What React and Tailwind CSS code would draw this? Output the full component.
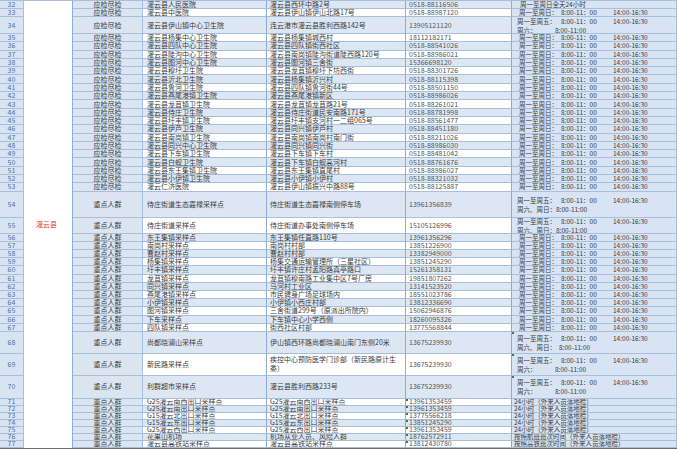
const rows = [
  [32, '应检尽检', '灌云县人民医院', '灌云县西环中路2号', '0518-88116506', 'all24'],
  [33, '应检尽检', '灌云县中医院', '灌云县伊山镇伊山北路17号', '0518-88987120', 'daily'],
  [34, '应检尽检', '灌云县伊山镇中心卫生院', '连云港市灌云县胜利西路142号', '13905121120', 'sat'],
  [35, '应检尽检', '灌云县杨集中心卫生院', '灌云县杨集镇城西村', '18112182171', 'daily'],
  [36, '应检尽检', '灌云县四队中心卫生院', '灌云县四队镇街西社区', '0518-88541026', 'daily'],
  [37, '应检尽检', '灌云县陡沟中心卫生院', '灌云县南岗镇陡沟街道陡西路120号', '0518-88986021', 'daily'],
  [38, '应检尽检', '灌云县图河中心卫生院', '灌云县图河镇三舍街', '15366698120', 'daily'],
  [39, '应检尽检', '灌云县穆圩卫生院', '灌云县龙苴镇穆圩下坊西街', '0518-88301726', 'daily'],
  [40, '应检尽检', '灌云县沂北卫生院', '灌云县杨集镇沂兴村', '0518-88115398', 'daily'],
  [41, '应检尽检', '灌云县鲁河卫生院', '灌云县四队镇鲁河街44号', '0518-88501150', 'daily'],
  [42, '应检尽检', '灌云县燕尾港镇卫生院', '灌云县燕尾港镇新区', '0518-88986026', 'daily'],
  [43, '应检尽检', '灌云县龙苴镇卫生院', '灌云县龙苴镇龙苴路21号', '0518-88261021', 'daily'],
  [44, '应检尽检', '灌云县侍庄卫生院', '灌云县侍庄街道民安南路171号', '0518-88781998', 'daily'],
  [45, '应检尽检', '灌云县圩丰镇卫生院', '灌云县圩丰镇支河村一二组065号', '0518-88561477', 'daily'],
  [46, '应检尽检', '灌云县伊芦卫生院', '灌云县同兴镇伊芦村', '0518-88451180', 'daily'],
  [47, '应检尽检', '灌云县南岗镇卫生院', '灌云县南岗镇南岗村南门街', '0518-88211026', 'daily'],
  [48, '应检尽检', '灌云县同兴中心卫生院', '灌云县同兴镇同兴街', '0518-88986030', 'daily'],
  [49, '应检尽检', '灌云县下车镇卫生院', '灌云县下车镇下车村', '0518-88481042', 'daily'],
  [50, '应检尽检', '灌云县白蚬卫生院', '灌云县下车镇白蚬高河村', '0518-88761676', 'daily'],
  [51, '应检尽检', '灌云县东王集镇卫生院', '灌云县东王集镇直尾村', '0518-88986027', 'daily'],
  [52, '应检尽检', '灌云县小伊镇卫生院', '灌云县小伊镇小伊村', '0518-88321032', 'daily'],
  [53, '应检尽检', '灌云仁济医院', '灌云县伊山镇振兴中路88号', '0518-88125887', 'daily'],
  [54, '重点人群', '侍庄街道生态嘉禄采样点', '侍庄街道生态嘉禄南侧停车场', '13961356839', 'weekend'],
  [55, '重点人群', '侍庄街道采样点', '侍庄街道办事处南侧停车场', '15105126996', 'weekend'],
  [56, '重点人群', '东王集镇采样点', '东王集镇任直路110号', '13961356296', 'daily'],
  [57, '重点人群', '南岗村采样点', '南岗村村部', '13851226900', 'daily'],
  [58, '重点人群', '曹赵村采样点', '曹赵村村部', '13382949000', 'daily'],
  [59, '重点人群', '杨集镇采样点', '杨集交通运输管理所（三星社区）', '13851245290', 'daily'],
  [60, '重点人群', '圩丰镇采样点', '圩丰镇许庄村孟阳路真亭路口', '15261358131', 'daily'],
  [61, '重点人群', '龙苴镇采样点', '龙苴镇穆南路工业集中区7号厂房', '19851807262', 'daily'],
  [62, '重点人群', '同兴镇采样点', '马河村工业区', '13141523520', 'daily'],
  [63, '重点人群', '燕尾港镇采样点', '市民健身广场足球场内', '18551023786', 'daily'],
  [64, '重点人群', '小伊镇采样点', '小伊镇小西庄村部', '13812336690', 'daily'],
  [65, '重点人群', '图河镇采样点', '三舍街道299号（原派出所院内）', '15062946876', 'daily'],
  [66, '重点人群', '下车采样点', '下车镇中心小学西侧', '18260095326', 'daily'],
  [67, '重点人群', '四队镇采样点', '街西社区村部', '13775568844', 'daily'],
  [68, '重点人群', '尚都晓澜山采样点', '伊山镇西环路尚都晓澜山南门东侧20米', '13675239930', 'weekend2'],
  [69, '重点人群', '新民路采样点', '疾控中心预防医学门诊部（新民路原计生委）', '13675239930', 'sat'],
  [70, '重点人群', '利群超市采样点', '灌云县胜利西路233号', '13675239930', 'sat'],
  [71, '重点人群', 'G25灌云南西出口采样点', 'G25灌云南西出口采样点', '13961353459', '24h'],
  [72, '重点人群', 'G25灌云南出口采样点', 'G25灌云南出口采样点', '13961353459', '24h'],
  [73, '重点人群', 'G15灌云北出口采样点', 'G15灌云北出口采样点', '13775566218', '24h'],
  [74, '重点人群', 'G15灌云东出口采样点', 'G15灌云东出口采样点', '13851245290', '24h'],
  [75, '重点人群', 'G25灌云西出口采样点', 'G25灌云西出口采样点', '13961353459', '24h'],
  [76, '重点人群', '花果山机场', '机场从业人员、风险人群', '18762572911', 'flight'],
  [77, '重点人群', '灌云县高铁站采样点', '灌云县高铁站采样点', '13812430780', 'train'],
]

// row heights follow the sheet: rows differ a little from block to block
const rowHeight = (n) => {
  if (n === 34) return 'h-[17px]'
  if (n === 54) return 'h-[26px]'
  if (n === 55) return 'h-[16px]'
  if (n === 68 || n === 69) return 'h-[22px]'
  if (n === 70) return 'h-[23px]'
  if (n <= 33) return 'h-[8px]'
  if (n <= 53) return 'h-[8.3px]'
  if (n <= 67) return 'h-[8.2px]'
  return 'h-[7px]'
}

const cell = 'relative flex items-center overflow-hidden whitespace-nowrap border-b border-r border-[#a8bfdc]'

// little "number stored as text" marker in the sheet
const Mark = () => <span className="absolute left-0 top-0 w-[2px] h-[2px] bg-[#3d7a4a]" />

function Times() {
  return (
    <>
      <span className="inline-block w-[52px]">8:00-11：00</span>
      <span>14:00-16:30</span>
    </>
  )
}

function Hours({ kind }) {
  if (kind === 'all24') return <div className="pl-[8px]">周一至周日全天24小时</div>
  if (kind === '24h') return <div className="pl-[2px]">24小时（外来人员落地检）</div>
  if (kind === 'flight') return <div className="pl-[2px]">按照航班班次时间（外来人员落地检）</div>
  if (kind === 'train') return <div className="pl-[2px]">按照高铁班次时间（外来人员落地检）</div>
  if (kind === 'daily')
    return (
      <div className="pl-[7px] flex">
        <span className="inline-block w-[42px]">周一至周日：</span>
        <Times />
      </div>
    )
  const second =
    kind === 'sat' ? (
      <div className="flex">
        <span className="inline-block w-[38px]">周六：</span>
        <span>8:00-11:00</span>
      </div>
    ) : kind === 'weekend' ? (
      <div>周六、周日：8:00-11:00</div>
    ) : (
      <div className="flex">
        <span className="inline-block w-[42px]">周六、周日：</span>
        <span>8:00-11:00</span>
      </div>
    )
  return (
    <div className="pl-[5px] flex flex-col gap-[1px] leading-[8px]">
      <div className="flex">
        <span className="inline-block w-[44px]">周一至周五：</span>
        <Times />
      </div>
      {second}
    </div>
  )
}

export default function App() {
  return (
    <div className="w-[677px] h-[449px] overflow-hidden bg-white font-['Noto_Sans_CJK_SC','Noto_Sans',sans-serif] text-[7px] leading-[7px] text-[#3a3a3a]">
      <div className="grid grid-cols-[24px_49px_70px_124px_139px_106px_165px] border-t border-[#a8bfdc]">
        <div className="col-start-2 row-start-1 row-span-46 bg-white border-r border-[#8eabd2] pt-[220px] pl-[12px] text-[#e23b36]">
          灌云县
        </div>
        {rows.map(([n, type, site, addr, phone, hours]) => {
          const h = rowHeight(n)
          const stripe = n % 2 === 0 ? 'bg-[#dde7f3]' : 'bg-white'
          return [
            <div key={n + 'a'} className={`${cell} ${h} justify-center bg-[#d9e4f2] text-[#4d6fa6]`}>{n}</div>,
            <div key={n + 'b'} className={`${cell} ${h} justify-center bg-[#dbe5f2]`}>{type}</div>,
            <div key={n + 'c'} className={`${cell} ${h} pl-[4px] border-r-[#8eabd2] ${stripe}`}>{site}</div>,
            <div key={n + 'd'} className={`${cell} ${h} pl-[3px] border-r-[#8eabd2] ${stripe}`}>
              {n === 69 ? (
                <div className="whitespace-normal leading-[9px] pr-[2px]">{addr}</div>
              ) : (
                addr
              )}
            </div>,
            <div key={n + 'e'} className={`${cell} ${h} pl-[3px] border-r-[#8eabd2] text-[#555] ${stripe}`}>
              {n >= 71 && <Mark />}
              {phone}
            </div>,
            <div key={n + 'f'} className={`${cell} ${h} bg-[#d8e4f3] text-[6.5px]`}>
              {n >= 68 && n <= 70 && <Mark />}
              <Hours kind={hours} />
            </div>,
          ]
        })}
      </div>
      <div className="h-[2px] bg-[#6d6d6d]" />
    </div>
  )
}
